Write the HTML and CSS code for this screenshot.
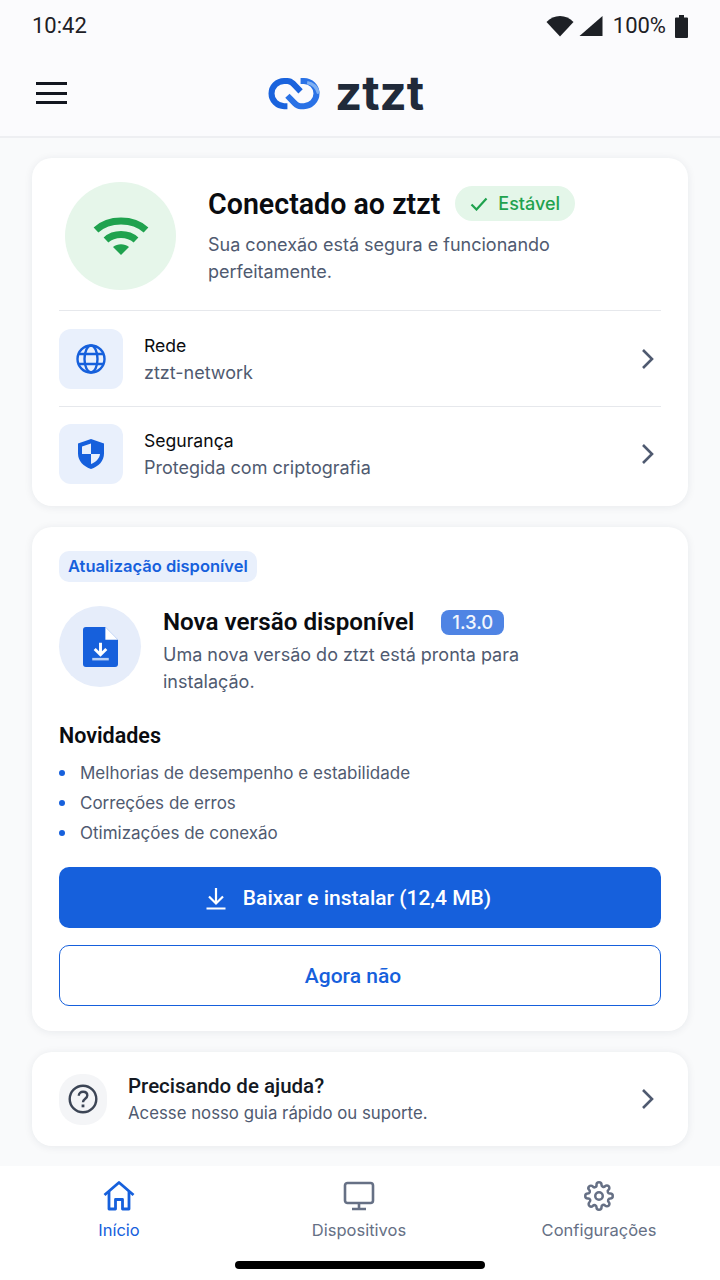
FILE: index.html
```html
<!DOCTYPE html>
<html lang="pt-BR">
<head>
    <meta charset="UTF-8">
    <meta name="viewport" content="width=device-width, initial-scale=1.0">
    <title>ztzt</title>
    <link rel="stylesheet" href="styles.css">
</head>
<body>
    <header class="top">
        <div class="status">
            <span class="time">10:42</span>
            <div class="status-right">
                <svg class="st-wifi" width="28" height="22" viewBox="0 0 28 22"><path d="M0.500 7C4 3.200 9 1 14 1s10 2.200 13.500 6L14 21.500z" fill="#1d2025"/></svg>
                <svg class="st-signal" width="24" height="22" viewBox="0 0 24 22"><path d="M23.500 1v20H.5z" fill="#1d2025"/></svg>
                <span class="batt-text">100%</span>
                <svg class="st-batt" width="13" height="23" viewBox="0 0 13 23"><path d="M4 0h5v2.500h3a1 1 0 0 1 1 1V22a1 1 0 0 1-1 1H1a1 1 0 0 1-1-1V3.500a1 1 0 0 1 1-1h3z" fill="#1d2025"/></svg>
            </div>
        </div>
        <div class="bar">
            <div class="menu"><span></span><span></span><span></span></div>
            <div class="logo">
                <svg width="52" height="34" viewBox="2.500 1 47 31" fill="none" stroke-width="5.500" stroke-linejoin="round">
                    <path d="M20 28.500h-3a11.500 11.500 0 0 1 0-23h3c2 0 3.500.8 5 2.300l7 7.200" stroke="#1a63dd"/>
                    <path d="M32 5.500h3a11.500 11.500 0 0 1 0 23h-3c-2 0-3.500-.8-5-2.300l-7-7.200" stroke="#2a72e6"/>
                    <path d="M38 7c5 .8 9 4.700 10.500 10" stroke="#7fb0f2" stroke-width="3"/>
                </svg>
                <span class="logo-text">ztzt</span>
            </div>
        </div>
    </header>

    <main class="content">
        <section class="card card-status">
            <div class="hero">
                <div class="hero-icon">
                    <svg width="56" height="42" viewBox="0 0 56 42" fill="none">
                        <path d="M3 15C9.500 9 18 6 28 6s18.500 3 25 9" stroke="#1fa24e" stroke-width="7"/>
                        <path d="M13 25c4-3.700 9-5.500 15-5.500s11 1.800 15 5.500" stroke="#1fa24e" stroke-width="7"/>
                        <path d="M20 32c2.300-1.800 5-2.700 8-2.700s5.700.9 8 2.700L28 40z" fill="#1fa24e"/>
                    </svg>
                </div>
                <div class="hero-text">
                    <div class="hero-head">
                        <h1>Conectado ao ztzt</h1>
                        <span class="pill-ok">
                            <svg width="18" height="14" viewBox="0 0 18 14" fill="none"><path d="M1.500 7.500l5 5L16.500 1.500" stroke="#1fa24e" stroke-width="2.200"/></svg>
                            Estável
                        </span>
                    </div>
                    <p>Sua conexão está segura e funcionando perfeitamente.</p>
                </div>
            </div>
            <div class="row">
                <div class="row-icon">
                    <svg width="30" height="30" viewBox="0 0 30 30" fill="none" stroke="#1660dc" stroke-width="2.400">
                        <circle cx="15" cy="15" r="13.500"/>
                        <ellipse cx="15" cy="15" rx="6.500" ry="13.500"/>
                        <path d="M3 10h24M3 20h24"/>
                    </svg>
                </div>
                <div class="row-text">
                    <div class="row-title">Rede</div>
                    <div class="row-sub">ztzt-network</div>
                </div>
                <svg class="chev" width="14" height="22" viewBox="0 0 14 22" fill="none"><path d="M2 2l9 9-9 9" stroke="#4f5a70" stroke-width="2.600"/></svg>
            </div>
            <div class="row">
                <div class="row-icon">
                    <svg width="28" height="32" viewBox="0 0 28 32"><path d="M14 1l13 4.500v10C27 23 21.500 28.500 14 31 6.500 28.500 1 23 1 15.500v-10z" fill="#1660dc"/><path d="M14 5.500L5 8.500V16h9zM14 16v10c5-2 8.500-5.500 9-10z" fill="#e9f0fc"/></svg>
                </div>
                <div class="row-text">
                    <div class="row-title">Segurança</div>
                    <div class="row-sub">Protegida com criptografia</div>
                </div>
                <svg class="chev" width="14" height="22" viewBox="0 0 14 22" fill="none"><path d="M2 2l9 9-9 9" stroke="#4f5a70" stroke-width="2.600"/></svg>
            </div>
        </section>

        <section class="card card-update">
            <span class="tag">Atualização disponível</span>
            <div class="update-head">
                <div class="update-icon">
                    <svg width="35" height="40" viewBox="0 0 36 41">
                        <path d="M3 0h20l13 13v25a3 3 0 0 1-3 3H3a3 3 0 0 1-3-3V3a3 3 0 0 1 3-3z" fill="#1660dc"/>
                        <path d="M23 0l13 13H23z" fill="#fff"/>
                        <path d="M18 16v12.500M12 22.500l6 6 6-6" stroke="#fff" stroke-width="3" fill="none"/>
                        <path d="M9.500 33h17" stroke="#b9d0f6" stroke-width="2.600"/>
                    </svg>
                </div>
                <div class="update-text">
                    <div class="update-title">
                        <h2>Nova versão disponível</h2>
                        <span class="version">1.3.0</span>
                    </div>
                    <p>Uma nova versão do ztzt está pronta para instalação.</p>
                </div>
            </div>
            <h3>Novidades</h3>
            <ul class="news">
                <li>Melhorias de desempenho e estabilidade</li>
                <li>Correções de erros</li>
                <li>Otimizações de conexão</li>
            </ul>
            <a class="btn btn-primary">
                <svg width="22" height="24" viewBox="0 0 22 24" fill="none" stroke="#fff" stroke-width="2.200"><path d="M11 2v15M4 10.500l7 7 7-7M1.500 22.500h19"/></svg>
                Baixar e instalar (12,4 MB)
            </a>
            <a class="btn btn-outline">Agora não</a>
        </section>

        <section class="card card-help">
            <div class="help-icon">
                <svg width="30" height="30" viewBox="0 0 30 30" fill="none" stroke="#3c4555" stroke-width="2.400">
                    <circle cx="15" cy="15" r="13.300"/>
                    <path d="M10.800 11.800c0-2.500 1.800-4 4.300-4s4.200 1.500 4.200 3.700c0 3.200-4.300 3.200-4.300 6.700"/>
                    <path d="M15 20.500v2.800" stroke-width="2.800"/>
                </svg>
            </div>
            <div class="help-text">
                <div class="help-title">Precisando de ajuda?</div>
                <div class="help-sub">Acesse nosso guia rápido ou suporte.</div>
            </div>
            <svg class="chev" width="14" height="22" viewBox="0 0 14 22" fill="none"><path d="M2 2l9 9-9 9" stroke="#4f5a70" stroke-width="2.600"/></svg>
        </section>
    </main>

    <nav class="tabs">
        <div class="tab tab-active">
            <svg width="32" height="30" viewBox="0 0 32 30" fill="none" stroke="#1660dc" stroke-width="2.800" stroke-linejoin="round"><path d="M1.500 14L16 1.500 30.500 14"/><path d="M6 10.500V28h6.500v-9.500h7V28H26V10.500"/></svg>
            <span>Início</span>
        </div>
        <div class="tab">
            <svg width="32" height="30" viewBox="0 0 32 30" fill="none" stroke="#667085" stroke-width="2.600"><rect x="2" y="2" width="28" height="20" rx="2.500"/><path d="M16 22v5M9 28h14"/></svg>
            <span>Dispositivos</span>
        </div>
        <div class="tab">
            <svg width="30" height="30" viewBox="0 0 24 24" fill="none" stroke="#667085" stroke-width="2" stroke-linejoin="round"><circle cx="12" cy="12" r="3"/><path d="M19.400 15a1.650 1.650 0 0 0 .33 1.820l.06.06a2 2 0 1 1-2.830 2.830l-.06-.06a1.650 1.650 0 0 0-2.900 1.170V21a2 2 0 1 1-4 0v-.09a1.650 1.650 0 0 0-2.820-1.110l-.06.06a2 2 0 1 1-2.830-2.830l.06-.06A1.650 1.650 0 0 0 3.090 14H3a2 2 0 1 1 0-4h.09A1.650 1.650 0 0 0 4.200 7.180l-.06-.06a2 2 0 1 1 2.830-2.830l.06.06A1.650 1.650 0 0 0 10 3.090V3a2 2 0 1 1 4 0v.09a1.650 1.650 0 0 0 2.820 1.110l.06-.06a2 2 0 1 1 2.830 2.830l-.06.06A1.650 1.650 0 0 0 20.910 10H21a2 2 0 1 1 0 4h-.09a1.650 1.650 0 0 0-1.510 1z"/></svg>
            <span>Configurações</span>
        </div>
        <div class="home-bar"></div>
    </nav>
</body>
</html>
```

FILE: styles.css
```css
* {
    box-sizing: border-box;
}
html, body {
    margin: 0;
    padding: 0;
}
body {
    width: 720px;
    height: 1280px;
    overflow: hidden;
    display: flex;
    flex-direction: column;
    background-color: #f9fafb;
    font-family: Inter, "Noto Sans", sans-serif;
    color: #0a0c10;
}
h1, h2, h3, p, ul {
    margin: 0;
    padding: 0;
}

/* topo */
.top {
    height: 138px;
    background-color: #fbfbfd;
    border-bottom: 2px solid #eeeff2;
    flex: none;
}
.status {
    height: 50px;
    padding: 14px 32px 0 32px;
    display: flex;
    justify-content: space-between;
    align-items: flex-start;
}
.time {
    font-family: Roboto, sans-serif;
    font-size: 22px;
    line-height: 24px;
    color: #1d2025;
}
.status-right {
    display: flex;
    align-items: center;
}
.st-signal {
    margin-left: 5px;
}
.batt-text {
    font-family: Roboto, sans-serif;
    font-size: 22px;
    line-height: 24px;
    color: #1d2025;
    margin-left: 10px;
    margin-right: 9px;
}
.bar {
    height: 86px;
    display: flex;
    align-items: center;
    padding: 0 0 0 36px;
}
.menu {
    width: 31px;
    display: flex;
    flex-direction: column;
    gap: 6.500px;
}
.menu span {
    display: block;
    height: 3px;
    background-color: #12161f;
}
.logo {
    display: flex;
    align-items: center;
    gap: 15px;
    margin-left: 201px;
    margin-bottom: 1px;
}
.logo-text {
    font-family: Inter, sans-serif;
    font-weight: 700;
    font-size: 47.500px;
    line-height: 44px;
    color: #202a3a;
}

/* cards */
.content {
    flex: 1;
    padding: 20px 32px 0 32px;
    display: flex;
    flex-direction: column;
    gap: 21px;
}
.card {
    background-color: #fff;
    border-radius: 20px;
    box-shadow: 0 1px 8px rgba(30, 40, 70, 0.08);
}
.card-status {
    height: 348px;
    padding: 24px 27px 0 27px;
}
.hero {
    display: flex;
    gap: 32px;
    height: 129px;
    padding-left: 6px;
    border-bottom: 1px solid #e6e8ec;
}
.hero-icon {
    width: 111px;
    height: 108px;
    border-radius: 50%;
    background-color: #e6f6ea;
    display: flex;
    align-items: center;
    justify-content: center;
    flex: none;
}
.hero-head {
    display: flex;
    align-items: center;
    gap: 15px;
    margin-top: 3px;
}
h1 {
    font-family: Roboto, sans-serif;
    font-size: 28.600px;
    line-height: 36px;
    font-weight: 600;
    padding-top: 1px;
}
.pill-ok {
    display: flex;
    align-items: center;
    gap: 10px;
    height: 35px;
    padding: 0 15px;
    border-radius: 18px;
    background-color: #e4f6e9;
    color: #1fa24e;
    font-size: 18px;
    font-weight: 500;
}
.hero-text p {
    font-size: 18px;
    line-height: 27px;
    color: #4f5a70;
    margin-top: 9px;
    width: 380px;
}
.row {
    display: flex;
    align-items: center;
    height: 96px;
    border-bottom: 1px solid #e6e8ec;
}
.row:last-child {
    border-bottom: none;
    padding-bottom: 2px;
}
.row-icon {
    width: 64px;
    height: 60px;
    border-radius: 12px;
    background-color: #e9f0fc;
    display: flex;
    align-items: center;
    justify-content: center;
    flex: none;
}
.row-text {
    margin-left: 21px;
    flex: 1;
}
.row-title {
    font-size: 17.600px;
    line-height: 27px;
}
.row-sub {
    font-size: 18px;
    line-height: 27px;
    color: #4f5a70;
}
.chev {
    margin-right: 6px;
    flex: none;
}

.card-update {
    height: 504px;
    padding: 24px 27px 0 27px;
}
.tag {
    display: inline-block;
    height: 31px;
    padding: 0 9px;
    border-radius: 10px;
    background-color: #e9f0fc;
    color: #1660dc;
    font-size: 16.500px;
    line-height: 31px;
    font-weight: 600;
}
.update-head {
    display: flex;
    margin-top: 24px;
    gap: 22px;
}
.update-icon {
    width: 82px;
    height: 81px;
    border-radius: 50%;
    background-color: #e6edfa;
    display: flex;
    align-items: center;
    justify-content: center;
    flex: none;
}
.update-title {
    display: flex;
    align-items: center;
    gap: 27px;
    margin-top: 1px;
}
h2 {
    font-family: Roboto, sans-serif;
    font-size: 24.200px;
    line-height: 30px;
    font-weight: 600;
}
.version {
    height: 25px;
    padding: 0 11px;
    border-radius: 8px;
    background-color: #4f84e4;
    color: #f2f6fd;
    font-size: 18.500px;
    line-height: 25px;
    font-weight: 500;
}
.update-text p {
    font-size: 18px;
    line-height: 27px;
    color: #4f5a70;
    margin-top: 4px;
    width: 390px;
}
h3 {
    font-family: Roboto, sans-serif;
    font-size: 21.500px;
    line-height: 28px;
    font-weight: 600;
    margin-top: 27px;
}
.news {
    list-style: none;
    margin-top: 8px;
}
.news li {
    position: relative;
    padding-left: 21px;
    font-size: 17px;
    line-height: 30px;
    color: #4f5a70;
}
.news li::before {
    content: "";
    position: absolute;
    left: 0;
    top: 12px;
    width: 6px;
    height: 6px;
    border-radius: 50%;
    background-color: #1660dc;
}
.btn {
    display: flex;
    align-items: center;
    justify-content: center;
    height: 61px;
    border-radius: 10px;
    font-family: Roboto, sans-serif;
    font-size: 21px;
    font-weight: 500;
}
.btn-primary {
    gap: 16px;
    margin-top: 19px;
    padding-right: 24px;
    background-color: #1660dc;
    color: #fff;
}
.btn-outline {
    margin-top: 17px;
    padding-right: 14px;
    background-color: #fff;
    color: #1660dc;
    border: 1.500px solid #1660dc;
}

.card-help {
    height: 94px;
    display: flex;
    align-items: center;
    padding: 0 27px;
}
.help-icon {
    width: 48px;
    height: 51px;
    border-radius: 22px;
    background-color: #f4f5f7;
    display: flex;
    align-items: center;
    justify-content: center;
    flex: none;
}
.help-text {
    margin-left: 21px;
    padding-top: 2px;
    flex: 1;
}
.help-title {
    font-family: Roboto, sans-serif;
    font-size: 20.500px;
    line-height: 27px;
    font-weight: 500;
    color: #141923;
}
.help-sub {
    font-size: 16.800px;
    line-height: 27px;
    color: #4f5a70;
}

/* navegacao */
.tabs {
    position: relative;
    flex: none;
    height: 114px;
    background-color: #fff;
    display: grid;
    grid-template-columns: 238px 242px 238px;
    padding-top: 15px;
}
.tab {
    display: flex;
    flex-direction: column;
    align-items: center;
    gap: 9px;
    font-size: 16.500px;
    line-height: 20px;
    color: #667085;
}
.tab-active {
    color: #1660dc;
}
.home-bar {
    position: absolute;
    left: 235px;
    bottom: 11px;
    width: 250px;
    height: 8px;
    border-radius: 4px;
    background-color: #000;
}
```
